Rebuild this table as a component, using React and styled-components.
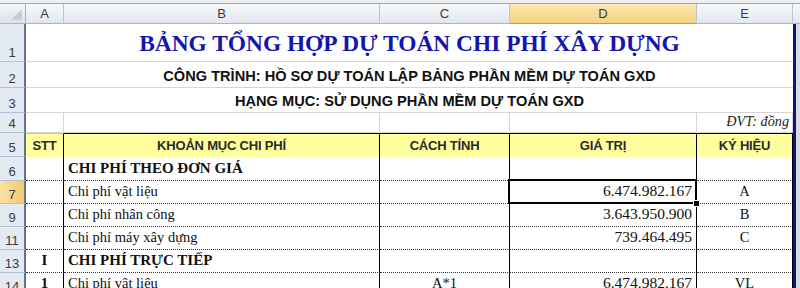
import React from "react";
import styled, { createGlobalStyle, css } from "styled-components";

const COLS = "26px 38px 316px 130px 187px 96px 7px";

const GlobalStyle = createGlobalStyle`
  body {
    margin: 0;
    background: #ffffff;
  }
`;

const Sheet = styled.div`
  width: 800px;
  height: 288px;
  overflow: hidden;
  background: #ffffff;
`;

const TopStrip = styled.div`
  height: 3px;
  background: #eef0f3;
  border-bottom: 1px solid #9aa6b6;
`;

const Row = styled.div`
  display: grid;
  grid-template-columns: ${COLS};
  height: ${(p) => p.$h}px;
`;

const Corner = styled.div`
  position: relative;
  background: linear-gradient(#f3f5f8, #dde2e9);
  border-right: 1px solid #9eb6ce;
  border-bottom: 1px solid #9eb6ce;
  &::after {
    content: "";
    position: absolute;
    right: 3px;
    bottom: 3px;
    border-left: 11px solid transparent;
    border-bottom: 11px solid #c5ccd6;
  }
`;

const ColHead = styled.div`
  display: flex;
  align-items: center;
  justify-content: center;
  font-family: "Liberation Sans", Arial, sans-serif;
  font-size: 13px;
  color: #3a3a3a;
  border-right: 1px solid #b9c6d6;
  border-bottom: 1px solid #9eb6ce;
  background: ${(p) =>
    p.$active
      ? "linear-gradient(#fbe7b4, #f6d27e)"
      : "linear-gradient(#f7f9fb, #e2e7ee)"};
  ${(p) =>
    p.$active &&
    css`
      border-bottom: 1px solid #c29b42;
    `}
`;

const RowHead = styled.div`
  display: flex;
  align-items: flex-end;
  justify-content: center;
  padding-bottom: 1px;
  font-family: "Liberation Sans", Arial, sans-serif;
  font-size: 13px;
  color: #3a3a3a;
  border-bottom: 1px solid #b2c1d3;
  border-right: 2px solid #66728a;
  background: ${(p) =>
    p.$active ? "linear-gradient(90deg, #fbe2a8, #f5c96b)" : "#e4eaf2"};
`;

const Edge = styled.div`
  border-left: 3px solid #12127a;
  background: #d9dde3;
`;

const HeadEdge = styled.div`
  background: linear-gradient(#f7f9fb, #e2e7ee);
  border-bottom: 1px solid #9eb6ce;
`;

const Merged = styled.div`
  grid-column: 2 / 7;
  display: flex;
  align-items: flex-end;
  justify-content: center;
  padding-bottom: ${(p) => p.$pb || 3}px;
  border-bottom: 1px solid #d6d6d6;
`;

const Title = styled.span`
  font-family: "Liberation Serif", "Times New Roman", serif;
  font-weight: bold;
  font-size: 23.4px;
  color: #1414b0;
  white-space: nowrap;
`;

const SubTitle = styled.span`
  font-family: "Liberation Sans", Arial, sans-serif;
  font-weight: bold;
  font-size: 14.6px;
  color: #111;
  white-space: nowrap;
`;

const GridCell = styled.div`
  display: flex;
  align-items: flex-end;
  justify-content: ${(p) => p.$justify || "flex-start"};
  padding: 0 3px 2px;
  border-right: 1px solid #d6d6d6;
  border-bottom: 1px solid #d6d6d6;
  font-family: "Liberation Serif", "Times New Roman", serif;
  font-style: italic;
  font-size: 14.2px;
  color: #222;
  white-space: nowrap;
`;

const HeadCell = styled.div`
  display: flex;
  align-items: center;
  justify-content: center;
  background: #ffff9e;
  border-top: 1px solid ${(p) => (p.$first ? "#c8c8a0" : "#000")};
  border-right: 1px solid #000;
  font-family: "Liberation Sans", Arial, sans-serif;
  font-weight: bold;
  font-size: 13px;
  letter-spacing: -0.2px;
  color: #2a2a2a;
  white-space: nowrap;
`;

const Cell = styled.div`
  position: relative;
  display: flex;
  align-items: flex-end;
  justify-content: ${(p) =>
    p.$align === "right"
      ? "flex-end"
      : p.$align === "center"
      ? "center"
      : "flex-start"};
  padding: 0 4px 3px;
  border-right: 1px solid #000;
  border-bottom: 1px dotted #333;
  font-family: "Liberation Serif", "Times New Roman", serif;
  font-size: ${(p) => (p.$num ? 15.5 : p.$bold ? 15 : 14.5)}px;
  font-weight: ${(p) => (p.$bold ? "bold" : "normal")};
  color: #111;
  white-space: nowrap;
  ${(p) =>
    p.$active &&
    css`
      &::after {
        content: "";
        position: absolute;
        left: -2px;
        top: -2px;
        right: -1px;
        bottom: -1px;
        border: 2px solid #000;
        pointer-events: none;
      }
      &::before {
        content: "";
        position: absolute;
        right: -4px;
        bottom: -4px;
        width: 5px;
        height: 5px;
        background: #000;
        border: 1px solid #fff;
        z-index: 2;
      }
    `}
`;

const dataRows = [
  { n: "6", h: 24, b: "CHI PHÍ THEO ĐƠN GIÁ", bold: true },
  { n: "7", h: 23, b: "Chi phí vật liệu", d: "6.474.982.167", e: "A", active: true },
  { n: "9", h: 23, b: "Chi phí nhân công", d: "3.643.950.900", e: "B" },
  { n: "11", h: 23, b: "Chi phí máy xây dựng", d: "739.464.495", e: "C" },
  { n: "13", h: 23, a: "I", b: "CHI PHÍ TRỰC TIẾP", bold: true },
  { n: "14", h: 23, a: "1", b: "Chi phí vật liệu", c: "A*1", d: "6.474.982.167", e: "VL" },
];

export default function App() {
  return (
    <Sheet>
      <GlobalStyle />
      <TopStrip />
      <Row $h={20}>
        <Corner />
        <ColHead>A</ColHead>
        <ColHead>B</ColHead>
        <ColHead>C</ColHead>
        <ColHead $active>D</ColHead>
        <ColHead>E</ColHead>
        <HeadEdge />
      </Row>

      <Row $h={38}>
        <RowHead>1</RowHead>
        <Merged $pb={4}>
          <Title>BẢNG TỔNG HỢP DỰ TOÁN CHI PHÍ XÂY DỰNG</Title>
        </Merged>
        <Edge />
      </Row>
      <Row $h={26}>
        <RowHead>2</RowHead>
        <Merged>
          <SubTitle>CÔNG TRÌNH: HỒ SƠ DỰ TOÁN LẬP BẢNG PHẦN MỀM DỰ TOÁN GXD</SubTitle>
        </Merged>
        <Edge />
      </Row>
      <Row $h={25}>
        <RowHead>3</RowHead>
        <Merged>
          <SubTitle>HẠNG MỤC: SỬ DỤNG PHẦN MỀM DỰ TOÁN GXD</SubTitle>
        </Merged>
        <Edge />
      </Row>
      <Row $h={20}>
        <RowHead>4</RowHead>
        <GridCell />
        <GridCell />
        <GridCell />
        <GridCell />
        <GridCell $justify="flex-end">ĐVT: đồng</GridCell>
        <Edge />
      </Row>
      <Row $h={24}>
        <RowHead>5</RowHead>
        <HeadCell $first>STT</HeadCell>
        <HeadCell>KHOẢN MỤC CHI PHÍ</HeadCell>
        <HeadCell>CÁCH TÍNH</HeadCell>
        <HeadCell>GIÁ TRỊ</HeadCell>
        <HeadCell>KÝ HIỆU</HeadCell>
        <Edge />
      </Row>

      {dataRows.map((r) => (
        <Row key={r.n} $h={r.h}>
          <RowHead $active={r.active}>{r.n}</RowHead>
          <Cell $align="center" $bold>
            {r.a}
          </Cell>
          <Cell $bold={r.bold}>{r.b}</Cell>
          <Cell $align="center">{r.c}</Cell>
          <Cell $align="right" $num $active={r.active}>
            {r.d}
          </Cell>
          <Cell $align="center">{r.e}</Cell>
          <Edge />
        </Row>
      ))}
    </Sheet>
  );
}
